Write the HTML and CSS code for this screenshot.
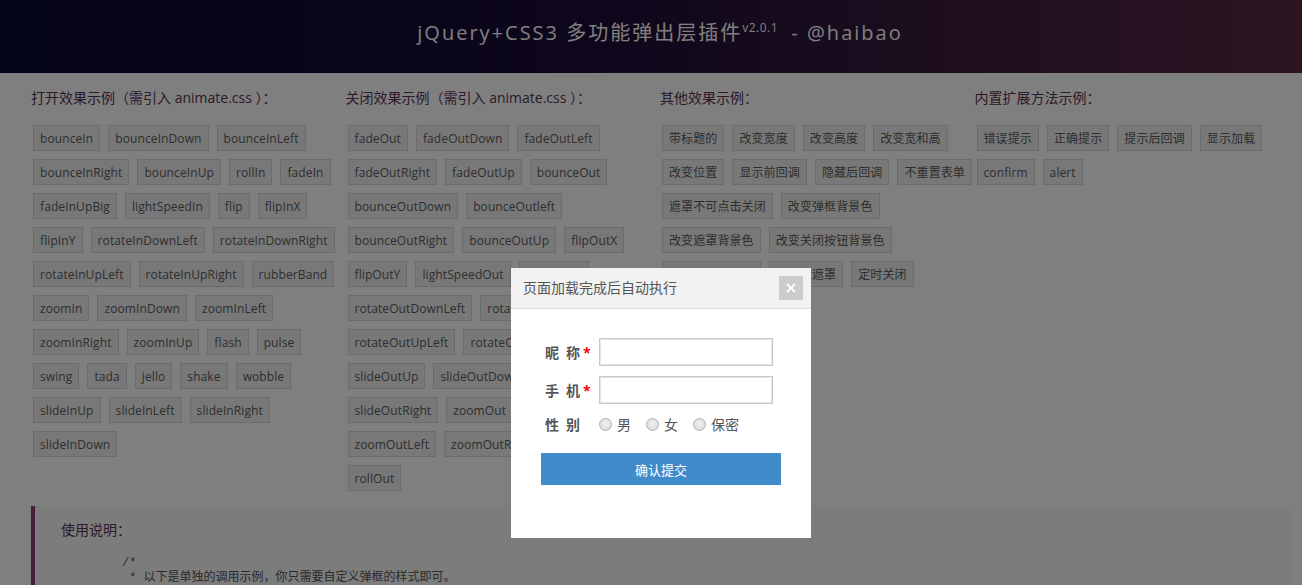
FILE: index.html
```html
<!DOCTYPE html>
<html lang="zh-CN">
<head>
  <meta charset="UTF-8">
  <title>jQuery+CSS3 多功能弹出层插件</title>
  <link rel="stylesheet" href="styles.css">
</head>
<body>
  <div class="header">
    <h1>jQuery+CSS3 多功能弹出层插件<sup>v2.0.1</sup> - @haibao</h1>
  </div>

  <div class="wrap">
    <div class="col">
      <h3>打开效果示例（需引入 animate.css ）：</h3>
      <div class="row"><button class="btn">bounceIn</button><button class="btn">bounceInDown</button><button class="btn">bounceInLeft</button></div>
      <div class="row"><button class="btn">bounceInRight</button><button class="btn">bounceInUp</button><button class="btn">rollIn</button><button class="btn">fadeIn</button></div>
      <div class="row"><button class="btn">fadeInUpBig</button><button class="btn">lightSpeedIn</button><button class="btn">flip</button><button class="btn">flipInX</button></div>
      <div class="row"><button class="btn">flipInY</button><button class="btn">rotateInDownLeft</button><button class="btn">rotateInDownRight</button></div>
      <div class="row"><button class="btn">rotateInUpLeft</button><button class="btn">rotateInUpRight</button><button class="btn">rubberBand</button></div>
      <div class="row"><button class="btn">zoomIn</button><button class="btn">zoomInDown</button><button class="btn">zoomInLeft</button></div>
      <div class="row"><button class="btn">zoomInRight</button><button class="btn">zoomInUp</button><button class="btn">flash</button><button class="btn">pulse</button></div>
      <div class="row"><button class="btn">swing</button><button class="btn">tada</button><button class="btn">jello</button><button class="btn">shake</button><button class="btn">wobble</button></div>
      <div class="row"><button class="btn">slideInUp</button><button class="btn">slideInLeft</button><button class="btn">slideInRight</button></div>
      <div class="row"><button class="btn">slideInDown</button></div>
    </div>

    <div class="col">
      <h3>关闭效果示例（需引入 animate.css ）：</h3>
      <div class="row"><button class="btn">fadeOut</button><button class="btn">fadeOutDown</button><button class="btn">fadeOutLeft</button></div>
      <div class="row"><button class="btn">fadeOutRight</button><button class="btn">fadeOutUp</button><button class="btn">bounceOut</button></div>
      <div class="row"><button class="btn">bounceOutDown</button><button class="btn">bounceOutleft</button></div>
      <div class="row"><button class="btn">bounceOutRight</button><button class="btn">bounceOutUp</button><button class="btn">flipOutX</button></div>
      <div class="row"><button class="btn">flipOutY</button><button class="btn">lightSpeedOut</button><button class="btn">rotateOut</button></div>
      <div class="row"><button class="btn">rotateOutDownLeft</button><button class="btn">rotateOutDownRight</button></div>
      <div class="row"><button class="btn">rotateOutUpLeft</button><button class="btn">rotateOutUpRight</button></div>
      <div class="row"><button class="btn">slideOutUp</button><button class="btn">slideOutDown</button><button class="btn">slideOutLeft</button></div>
      <div class="row"><button class="btn">slideOutRight</button><button class="btn">zoomOut</button><button class="btn">zoomOutDown</button></div>
      <div class="row"><button class="btn">zoomOutLeft</button><button class="btn">zoomOutRight</button><button class="btn">zoomOutUp</button></div>
      <div class="row"><button class="btn">rollOut</button></div>
    </div>

    <div class="col">
      <h3>其他效果示例：</h3>
      <div class="row"><button class="btn">带标题的</button><button class="btn">改变宽度</button><button class="btn">改变高度</button><button class="btn">改变宽和高</button></div>
      <div class="row"><button class="btn">改变位置</button><button class="btn">显示前回调</button><button class="btn">隐藏后回调</button><button class="btn">不重置表单</button></div>
      <div class="row"><button class="btn">遮罩不可点击关闭</button><button class="btn">改变弹框背景色</button></div>
      <div class="row"><button class="btn">改变遮罩背景色</button><button class="btn">改变关闭按钮背景色</button></div>
      <div class="row"><button class="btn">不显示关闭按钮</button><button class="btn">不显示遮罩</button><button class="btn">定时关闭</button></div>
    </div>

    <div class="col">
      <h3>内置扩展方法示例：</h3>
      <div class="row"><button class="btn">错误提示</button><button class="btn">正确提示</button><button class="btn">提示后回调</button><button class="btn">显示加载</button></div>
      <div class="row"><button class="btn">confirm</button><button class="btn">alert</button></div>
    </div>
  </div>

  <div class="usage">
    <h4>使用说明：</h4>
<pre>/*
 * 以下是单独的调用示例，你只需要自定义弹框的样式即可。
 */</pre>
  </div>

  <!-- 遮罩与弹框 -->
  <div class="mask"></div>
  <div class="popup">
    <div class="popup-head">
      <span class="popup-title">页面加载完成后自动执行</span>
      <span class="popup-close">
        <svg width="10" height="10" viewBox="0 0 10 10"><path d="M1 1L9 9M9 1L1 9" stroke="#fff" stroke-width="1.8"/></svg>
      </span>
    </div>
    <form class="popup-body">
      <div class="field">
        <label class="name">昵&ensp;称<i class="star">*</i></label>
        <input type="text" class="ipt">
      </div>
      <div class="field">
        <label class="name">手&ensp;机<i class="star">*</i></label>
        <input type="text" class="ipt">
      </div>
      <div class="field sex">
        <label class="name">性&ensp;别<i class="star blank">*</i></label>
        <span class="radio"></span><span class="opt">男</span>
        <span class="radio"></span><span class="opt">女</span>
        <span class="radio"></span><span class="opt">保密</span>
      </div>
      <button type="button" class="submit">确认提交</button>
    </form>
  </div>
</body>
</html>
```

FILE: styles.css
```css
body {
  margin: 0;
  padding: 0;
  background: #fff;
  font-family: "Open Sans", "Noto Sans CJK SC", sans-serif;
  color: #555;
  overflow: hidden;
}

.header {
  height: 73px;
  background: linear-gradient(90deg, #060634 0%, #1c0d38 45%, #5a2a44 100%);
  text-align: center;
}

.header h1 {
  margin: 0;
  padding-left: 18px;
  line-height: 56px;
  font-size: 20px;
  font-weight: normal;
  letter-spacing: 2px;
  color: #fff;
}

.header sup {
  font-size: 12px;
  letter-spacing: 0.5px;
  margin-right: 6px;
}

.wrap {
  display: grid;
  grid-template-columns: repeat(4, minmax(0, 1fr));
  padding: 15px 13px 0 31px;
}

.col h3 {
  margin: 0 0 17px;
  font-size: 14px;
  font-weight: normal;
  line-height: 20px;
  color: #5a3450;
  white-space: nowrap;
}

.row {
  display: flex;
  gap: 8px;
  padding-left: 2px;
  margin-bottom: 8px;
  white-space: nowrap;
}

.btn {
  flex: none;
  height: 26px;
  padding: 0 6px;
  border: 1px solid #d6d6d6;
  background: #f0f0f0;
  color: #5c5c5c;
  font-family: "Open Sans", "Noto Sans CJK SC", sans-serif;
  font-size: 12px;
  letter-spacing: 0.1px;
  cursor: pointer;
}

.usage {
  margin: 7px 12px 0 31px;
  padding: 12px 26px 20px;
  border-left: 4px solid #8e3a70;
  background: #f8f8f8;
}

.usage h4 {
  margin: 0 0 14px;
  font-size: 14px;
  font-weight: normal;
  line-height: 24px;
  color: #5a3450;
}

.usage pre {
  margin: 0 0 0 61px;
  font-family: "Liberation Mono", "Noto Sans CJK SC", monospace;
  font-size: 12px;
  line-height: 15px;
  color: #555;
}

/* 遮罩层 */
.mask {
  position: fixed;
  top: 0;
  left: 0;
  right: 0;
  bottom: 0;
  background: rgba(0, 0, 0, 0.5);
  z-index: 10;
}

.popup {
  position: fixed;
  left: 511px;
  top: 268px;
  width: 300px;
  height: 270px;
  background: #fff;
  z-index: 11;
}

.popup-head {
  position: relative;
  height: 40px;
  background: #f2f2f2;
  border-bottom: 1px solid #ddd;
}

.popup-title {
  display: block;
  padding-left: 12px;
  line-height: 40px;
  font-size: 14px;
  color: #555;
}

.popup-close {
  position: absolute;
  top: 8px;
  right: 8px;
  width: 24px;
  height: 24px;
  background: #ccc;
  display: flex;
  align-items: center;
  justify-content: center;
}

.popup-body {
  margin: 0;
  padding: 29px 30px 0;
}

.field {
  display: flex;
  align-items: center;
  height: 28px;
  margin-bottom: 10px;
}

.field.sex {
  height: 20px;
  margin-bottom: 19px;
}

.name {
  width: 47px;
  margin-right: 11px;
  text-align: right;
  white-space: nowrap;
  font-size: 14px;
  font-weight: bold;
  color: #555;
}

.star {
  display: inline-block;
  width: 5px;
  margin-left: 3px;
  color: #f00;
  font-style: normal;
  font-weight: bold;
}

.star.blank {
  visibility: hidden;
}

.ipt {
  box-sizing: border-box;
  width: 174px;
  height: 28px;
  margin: 0;
  border: 1px solid #c8c8c8;
  box-shadow: inset 0 0 0 1px #e6e6e6;
  outline: none;
}

.radio {
  box-sizing: border-box;
  width: 13px;
  height: 13px;
  border: 1px solid #b0b0b0;
  border-radius: 50%;
  background: radial-gradient(circle at 50% 40%, #f2f2f2, #d4d4d4);
}

.opt {
  margin: 0 15px 0 5px;
  font-size: 14px;
  color: #555;
}

.submit {
  display: block;
  width: 240px;
  height: 32px;
  border: 0;
  background: #428bca;
  color: #fff;
  font-family: "Open Sans", "Noto Sans CJK SC", sans-serif;
  font-size: 13px;
  cursor: pointer;
}
```
